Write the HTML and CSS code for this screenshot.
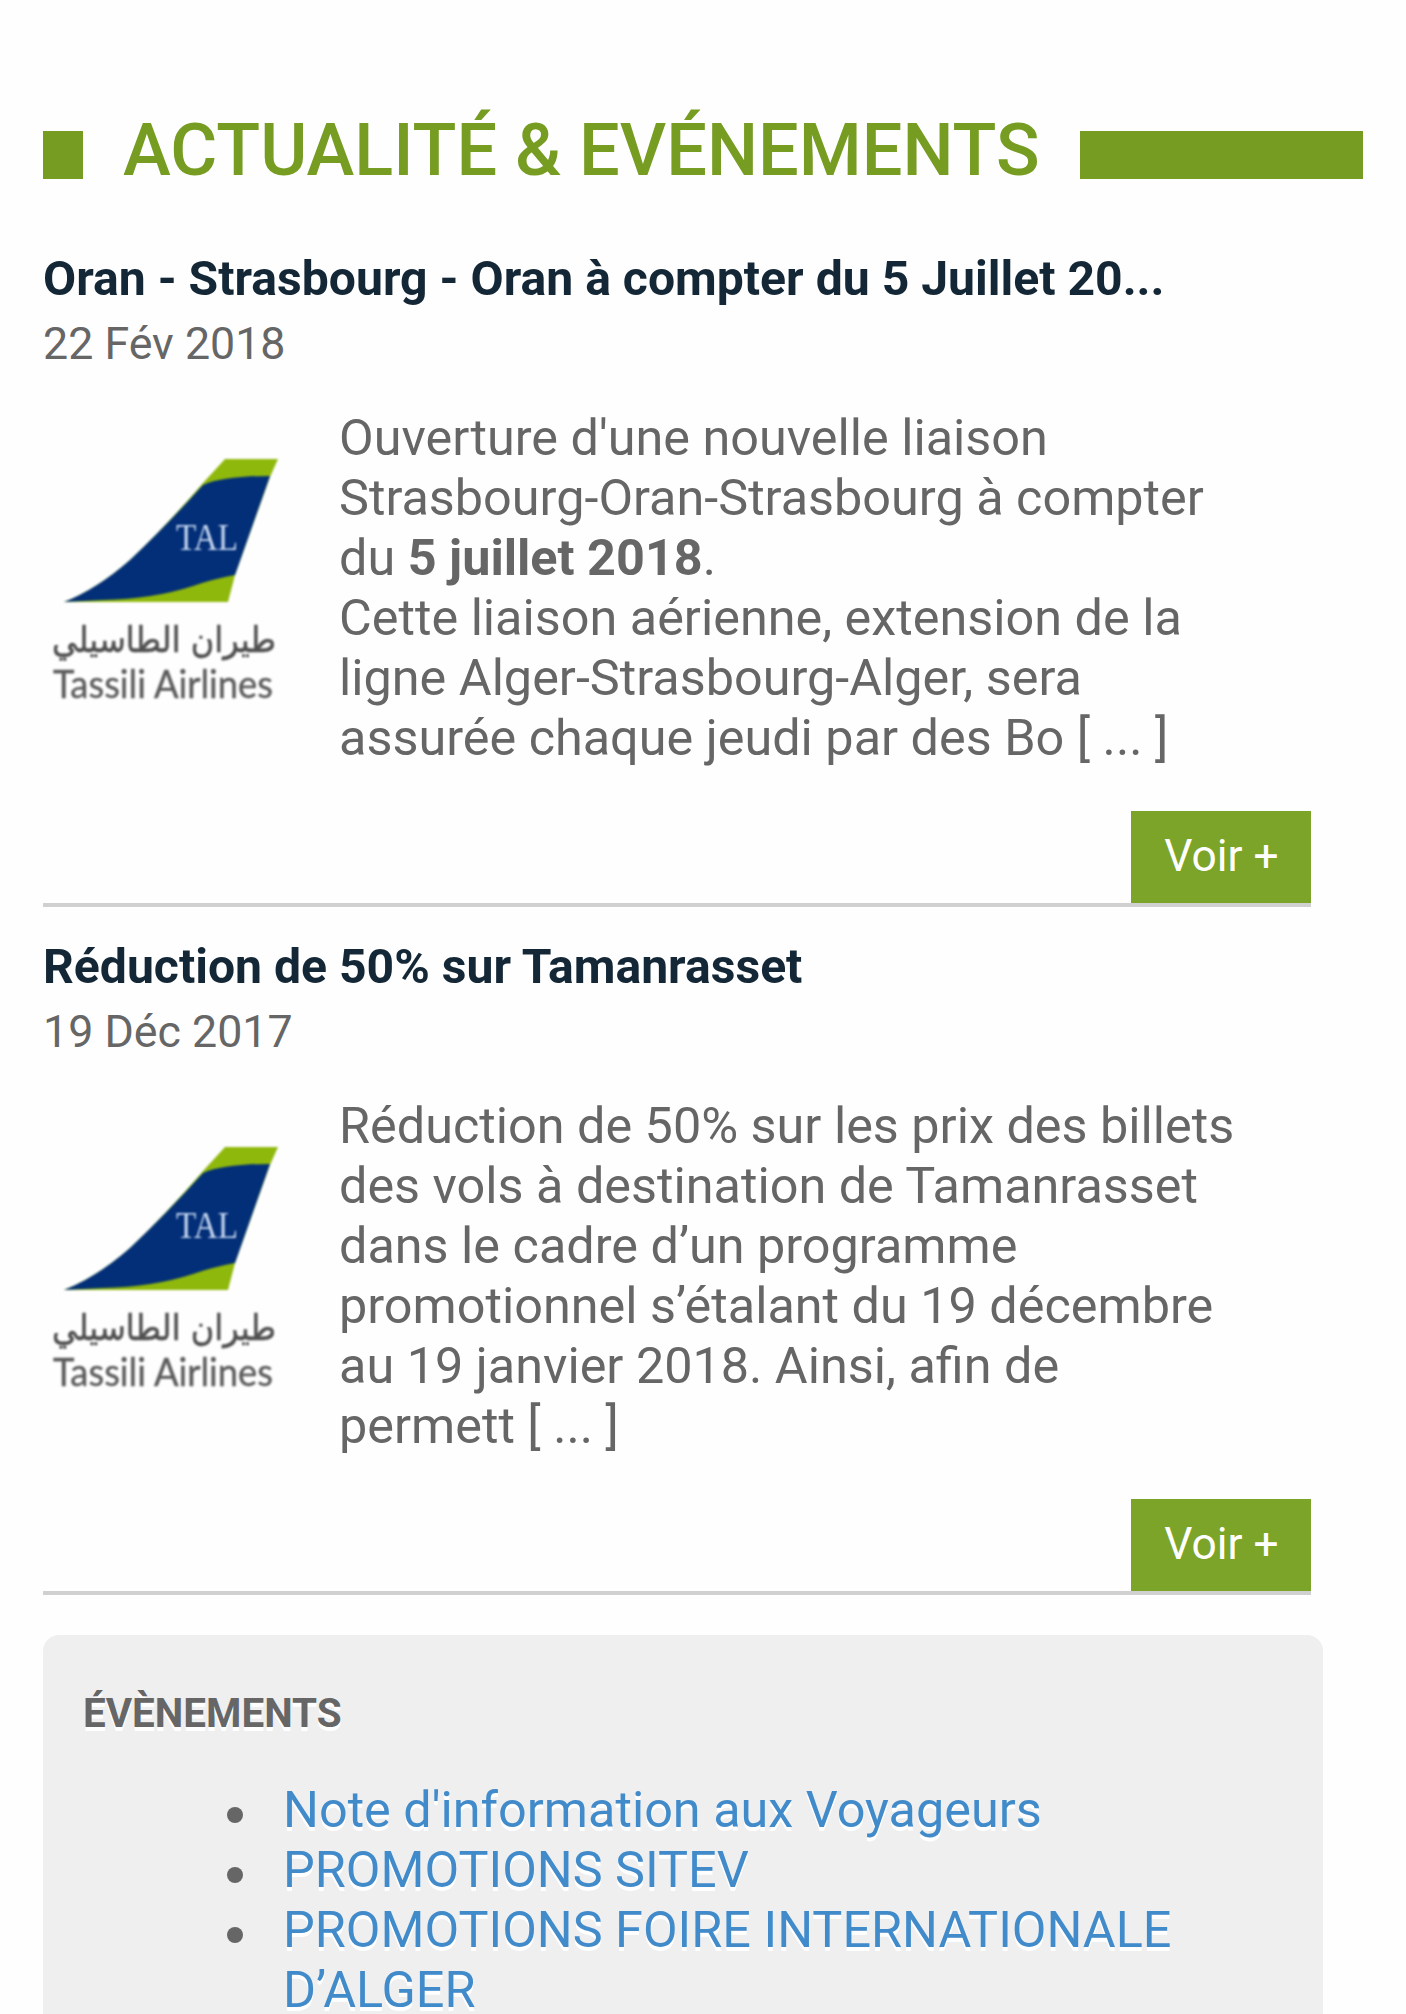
FILE: index.html
```
<!DOCTYPE html>
<html lang="fr">
<head>
    <meta charset="UTF-8">
    <meta name="viewport" content="width=device-width, initial-scale=1.0">
    <title>Actualité &amp; Evénements</title>
    <link rel="stylesheet" href="styles.css">
</head>
<body>

    <div class="container">
        <div class="titre">
            <span class="carre"></span>
            <h1>ACTUALITÉ &amp; EVÉNEMENTS</h1>
            <span class="barre"></span>
        </div>

        <div class="article">
            <h2>Oran - Strasbourg - Oran à compter du 5 Juillet 20...</h2>
            <p class="date">22 Fév 2018</p>
            <div class="contenu">
                <svg class="logo" viewBox="0 0 256 280">
                    <path fill="#8fb80c" d="M21 172 Q54 159 87 130 Q122 97 160 53 L182 29 H235 L227 47 L192 145 L185 172 Z"/>
                    <path fill="#032f78" d="M21 172 Q54 159 87 130 Q122 97 160 55 Q180 46 227 46 L192 145 Q170 149 150 156 Q110 169 60 170 Z"/>
                    <text class="logo-tal" x="133" y="120" textLength="62" lengthAdjust="spacingAndGlyphs">TAL</text>
                    <text class="logo-ar" x="121" y="222" text-anchor="middle" textLength="224" lengthAdjust="spacingAndGlyphs">طيران الطاسيلي</text>
                    <text class="logo-name" x="10" y="268" textLength="220" lengthAdjust="spacingAndGlyphs">Tassili Airlines</text>
                </svg>
                <p>Ouverture d'une nouvelle liaison<br>Strasbourg-Oran-Strasbourg à compter<br>du <b>5 juillet 2018</b>.<br>Cette liaison aérienne, extension de la<br>ligne Alger-Strasbourg-Alger, sera<br>assurée chaque jeudi par des Bo [ ... ]</p>
            </div>
            <a class="voir">Voir +</a>
        </div>

        <div class="article">
            <h2>Réduction de 50% sur Tamanrasset</h2>
            <p class="date">19 Déc 2017</p>
            <div class="contenu">
                <svg class="logo" viewBox="0 0 256 280">
                    <path fill="#8fb80c" d="M21 172 Q54 159 87 130 Q122 97 160 53 L182 29 H235 L227 47 L192 145 L185 172 Z"/>
                    <path fill="#032f78" d="M21 172 Q54 159 87 130 Q122 97 160 55 Q180 46 227 46 L192 145 Q170 149 150 156 Q110 169 60 170 Z"/>
                    <text class="logo-tal" x="133" y="120" textLength="62" lengthAdjust="spacingAndGlyphs">TAL</text>
                    <text class="logo-ar" x="121" y="222" text-anchor="middle" textLength="224" lengthAdjust="spacingAndGlyphs">طيران الطاسيلي</text>
                    <text class="logo-name" x="10" y="268" textLength="220" lengthAdjust="spacingAndGlyphs">Tassili Airlines</text>
                </svg>
                <p>Réduction de 50% sur les prix des billets<br>des vols à destination de Tamanrasset<br>dans le cadre d’un programme<br>promotionnel s’étalant du 19 décembre<br>au 19 janvier 2018. Ainsi, afin de<br>permett [ ... ]</p>
            </div>
            <a class="voir">Voir +</a>
        </div>

        <div class="evenements">
            <h3>ÉVÈNEMENTS</h3>
            <ul>
                <li><a>Note d'information aux Voyageurs</a></li>
                <li><a>PROMOTIONS SITEV</a></li>
                <li><a>PROMOTIONS FOIRE INTERNATIONALE<br>D’ALGER</a></li>
            </ul>
        </div>
    </div>

</body>
</html>
```
FILE: styles.css
```
* {
    margin: 0;
    padding: 0;
    box-sizing: border-box;
}
html, body {
    height: 2014px;
    overflow: hidden;
}
body {
    font-family: Roboto, sans-serif;
    font-size: 50.37px;
    line-height: 60px;
    color: #666;
    background-color: #fefefe;
}
.container {
    padding: 109px 43px 0;
}
.titre {
    display: flex;
    align-items: flex-start;
    gap: 40px;
    width: 1320px;
    height: 142px;
}
.carre, .barre {
    height: 48px;
    margin-top: 22px;
    background-color: #769c22;
}
.carre {
    width: 40px;
}
.barre {
    flex: 1;
}
h1 {
    font-size: 72.04px;
    line-height: 84px;
    font-weight: 500;
    color: #769c22;
    white-space: nowrap;
}
.article {
    display: flex;
    flex-direction: column;
    width: 1268px;
    height: 656px;
    margin-bottom: 32px;
    border-bottom: 4px solid #d0d0d0;
}
h2 {
    font-size: 48.12px;
    line-height: 56px;
    font-weight: bold;
    color: #142736;
    white-space: nowrap;
}
.date {
    margin-top: 7px;
    font-size: 44.75px;
}
.contenu {
    display: flex;
    gap: 40px;
    margin-top: 34px;
    white-space: nowrap;
}
.logo {
    flex: none;
    width: 256px;
    height: 280px;
    margin-top: 22px;
    overflow: visible;
    filter: blur(1.2px);
}
.logo-tal {
    font-family: "Liberation Serif", serif;
    font-size: 37px;
    fill: #c5d7f0;
}
.logo-ar {
    font-family: "DejaVu Sans", sans-serif;
    font-size: 35px;
    fill: #505050;
    stroke: #505050;
    stroke-width: 0.6px;
}
.logo-name {
    font-family: Lato, sans-serif;
    font-size: 38px;
    fill: #5c5c5c;
    stroke: #5c5c5c;
    stroke-width: 0.4px;
}
.voir {
    align-self: flex-end;
    width: 180px;
    height: 92px;
    margin-top: auto;
    padding-left: 1px;
    font-size: 44.3px;
    line-height: 90px;
    text-align: center;
    color: #fff;
    background-color: #7ca428;
}
.evenements {
    width: 1280px;
    height: 420px;
    margin-top: 40px;
    padding: 49px 40px;
    border-radius: 16px;
    background-color: #efefef;
    text-shadow: 0 4px 0 #fff;
}
h3 {
    font-size: 40.4px;
}
ul {
    margin-top: 36px;
    padding-left: 200px;
    list-style: none;
}
li {
    display: flex;
    white-space: nowrap;
}
li::before {
    content: "";
    flex: none;
    width: 16px;
    height: 16px;
    margin: 27px 40px 0 -56px;
    border-radius: 50%;
    background-color: #666;
}
li a {
    color: #428bca;
}
```
